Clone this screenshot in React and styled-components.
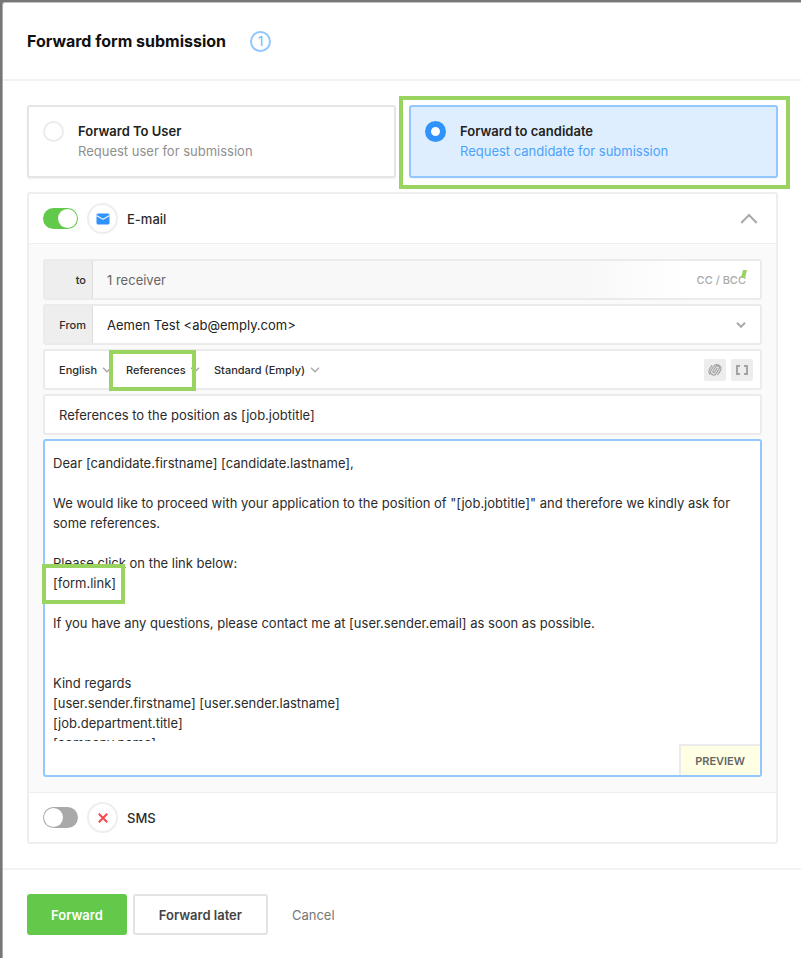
import React, { useState } from 'react';
import styled, { createGlobalStyle } from 'styled-components';

const BORDER = '#ebebeb';
const BLUE = '#2f93fb';
const LIGHT_BLUE = '#93c7fd';
const GREEN = '#62c94b';
const MARK_GREEN = '#98d45f';

const GlobalStyle = createGlobalStyle`
  *, *::before, *::after {
    box-sizing: border-box;
  }
  body {
    margin: 0;
    background: #777;
    color: #2b2b2b;
    font-family: Inter, 'Liberation Sans', sans-serif;
    font-size: 13px;
    line-height: 20px;
  }
  button, input, select, textarea {
    margin: 0;
    padding: 0;
    border: 0;
    background: none;
    color: inherit;
    font: inherit;
    appearance: none;
    outline: none;
  }
  button, select {
    cursor: pointer;
  }
`;

const Backdrop = styled.div`
  min-height: 100vh;
  display: flex;
  padding: 2px 0 0 2px;
`;
const Modal = styled.form`
  flex: 1;
  min-width: 0;
  background: white;
  border-left: 1px solid #aaa;
  border-top: 1px solid #c4c4c4;
  border-top-left-radius: 3px;
`;
const Header = styled.header`
  display: flex;
  align-items: center;
  gap: 24px;
  height: 78px;
  padding: 0 24px;
  border-bottom: 2px solid #f2f2f2;
`;
const Title = styled.h1`
  margin: 0;
  font-size: 16px;
  font-weight: 700;
  color: #111;
`;
const Step = styled.span`
  display: flex;
  align-items: center;
  justify-content: center;
  width: 21px;
  height: 21px;
  border: 2px solid ${LIGHT_BLUE};
  border-radius: 50%;
  color: #6fb4fb;
  font-size: 13px;
`;
const Body = styled.main`
  padding: 24px 23px 24px 24px;
`;

const Mark = styled.span`
  position: absolute;
  inset: ${({ $inset }) => $inset};
  border: 4px solid ${MARK_GREEN};
  pointer-events: none;
`;

const Choices = styled.div`
  display: grid;
  grid-template-columns: 1fr 1fr;
  gap: 13px;
  margin-bottom: 14px;
`;
const Choice = styled.label`
  position: relative;
  display: flex;
  gap: 14px;
  height: 73px;
  padding: 14px;
  border: 2px solid ${({ $active }) => ($active ? LIGHT_BLUE : '#e5e5e5')};
  border-radius: 3px;
  background: ${({ $active }) => ($active ? '#dfeefe' : 'white')};
  box-shadow: 0 1px 2px rgba(0, 0, 0, 0.06);
  cursor: pointer;
`;
const Radio = styled.input`
  flex: none;
  width: 21px;
  height: 21px;
  border: 2px solid #ececec;
  border-radius: 50%;
  background: white;
  &:checked {
    border: 6px solid ${BLUE};
  }
`;
const ChoiceText = styled.span`
  display: flex;
  flex-direction: column;
`;
const ChoiceTitle = styled.span`
  font-weight: 600;
  color: #222;
`;
const ChoiceHint = styled.span`
  color: ${({ $active }) => ($active ? '#4aa2fb' : '#8f8f8f')};
`;

const Panel = styled.section`
  border: 2px solid #eee;
  border-radius: 3px;
`;
const ChannelHead = styled.div`
  display: flex;
  align-items: center;
  height: 49px;
  padding: 0 14px;
`;
const Channel = styled.label`
  display: flex;
  align-items: center;
  gap: 9px;
  font-weight: 500;
`;
const Toggle = styled.input`
  display: flex;
  align-items: center;
  width: 35px;
  height: 21px;
  padding: 1px;
  border-radius: 11px;
  background: #a9a9a9;
  cursor: pointer;
  &::before {
    content: '';
    width: 19px;
    height: 19px;
    border-radius: 50%;
    background: white;
  }
  &:checked {
    justify-content: flex-end;
    background: ${GREEN};
  }
`;
const Badge = styled.span`
  display: flex;
  align-items: center;
  justify-content: center;
  width: 31px;
  height: 31px;
  border: 2px solid #eee;
  border-radius: 50%;
`;
const Collapse = styled.button`
  display: flex;
  margin-left: auto;
  padding: 4px;
`;

const Compose = styled.div`
  display: grid;
  gap: 4px;
  padding: 15px 14px;
  background: #fafafa;
  border-top: 1px solid #efefef;
  border-bottom: 1px solid #efefef;
`;
const Row = styled.div`
  display: flex;
  align-items: center;
  height: 41px;
  border: 2px solid ${BORDER};
  border-radius: 3px;
  background: ${({ $fade }) =>
    $fade ? 'linear-gradient(90deg, #f8f8f8 75%, white 90%)' : 'white'};
`;
const RowLabel = styled.label`
  align-self: stretch;
  display: flex;
  align-items: center;
  justify-content: flex-end;
  width: 48px;
  padding-right: 6px;
  border-right: 1px solid #ddd;
  background: #eee;
  font-size: 11px;
  font-weight: 500;
`;
const RowInput = styled.input`
  flex: 1;
  min-width: 0;
  padding: 0 14px;
  color: ${({ readOnly }) => (readOnly ? '#666' : 'inherit')};
`;
const RowSelect = styled.select`
  flex: 1;
  padding: 0 14px;
  color: #222;
`;
const CopyButton = styled.button`
  position: relative;
  margin-right: 14px;
  font-size: 11px;
  font-weight: 500;
  color: #aaa;
`;
const Tick = styled.span`
  position: absolute;
  top: 0;
  right: 0;
  width: 4px;
  height: 8px;
  background: ${MARK_GREEN};
  transform: skewX(-14deg);
`;
const RowChevron = styled.span`
  display: flex;
  margin-right: 14px;
`;
const Toolbar = styled(Row)`
  gap: 14px;
  padding: 0 7px 0 14px;
`;
const Picker = styled.div`
  position: relative;
  display: flex;
  align-items: center;
  gap: 4px;
`;
const SmallSelect = styled.select`
  font-size: 11px;
  font-weight: 500;
`;
const Tools = styled.div`
  display: flex;
  gap: 5px;
  margin-left: auto;
`;
const Tool = styled.button`
  display: flex;
  align-items: center;
  justify-content: center;
  width: 22px;
  height: 22px;
  border-radius: 2px;
  background: #ededed;
`;

const Editor = styled.div`
  position: relative;
  display: flex;
  flex-direction: column;
  gap: 3px;
  border: 2px solid ${LIGHT_BLUE};
  border-radius: 3px;
  background: white;
`;
const Message = styled.textarea`
  display: block;
  height: 300px;
  padding: 12px 8px 0;
  overflow: hidden;
  resize: none;
`;
const LinkMark = styled.span`
  position: absolute;
  top: 123px;
  left: -3px;
  width: 83px;
  height: 40px;
  border: 4px solid ${MARK_GREEN};
  pointer-events: none;
`;
const Preview = styled.button`
  align-self: flex-end;
  height: 31px;
  padding: 0 15px 0 14px;
  border: solid ${BORDER};
  border-width: 2px 0 0 2px;
  background: #feffe3;
  color: #666;
  font-size: 11px;
  font-weight: 600;
`;

const Footer = styled.footer`
  display: flex;
  align-items: center;
  gap: 6px;
  padding: 24px;
  border-top: 2px solid #f2f2f2;
`;
const Button = styled.button`
  height: 41px;
  padding: 0 24px;
  border: ${({ $primary }) => ($primary ? '0' : '2px solid #e3e3e3')};
  border-radius: 3px;
  background: ${({ $primary }) => ($primary ? GREEN : 'white')};
  color: ${({ $primary }) => ($primary ? 'white' : '#444')};
  font-weight: 600;
`;
const Cancel = styled.button`
  padding: 0 18px;
  color: #777;
`;

const Chevron = ({ size = 10, up, weight = 1.5 }) => (
  <svg width={size} height={size} viewBox="0 0 10 10" fill="none" stroke="#aaa" strokeWidth={weight}>
    <path d={up ? 'M0.7 7.2 5 2.8l4.3 4.4' : 'M1 2.8l4 4 4-4'} />
  </svg>
);

const MailIcon = () => (
  <svg width="14" height="12" viewBox="0 0 14 12">
    <rect x="0.5" y="0.5" width="13" height="11" rx="1.5" fill={BLUE} />
    <path d="M0.5 2.6l6.5 3.6 6.5-3.6" fill="none" stroke="#d9ebfe" strokeWidth="1.3" />
  </svg>
);

const CrossIcon = () => (
  <svg width="12" height="12" viewBox="0 0 12 12" stroke="#f4484d" strokeWidth="2">
    <path d="M1.8 1.8l8.4 8.4M10.2 1.8l-8.4 8.4" />
  </svg>
);

const ClipIcon = () => (
  <svg width="14" height="14" viewBox="0 0 14 14" fill="none" stroke="#a3a3a3" strokeWidth="1.2" strokeLinecap="round">
    <g transform="rotate(32 7 7)">
      <path d="M7.900 4.500v4.600a1 1 0 0 1-2 0V4a2 2 0 0 1 4 0v5.500a3 3 0 0 1-6 0V4.500a3.700 3.700 0 0 1 4-3.600 3.700 3.700 0 0 1 4 3.800v4.600" />
      <path d="M2 5v4.500a4.500 4.500 0 0 0 3 3.700" />
    </g>
  </svg>
);

const BracketsIcon = () => (
  <svg width="14" height="12" viewBox="0 0 14 12" fill="none" stroke="#a3a3a3" strokeWidth="2">
    <path d="M5 2H2v8h3M9 2h3v8H9" />
  </svg>
);

const MESSAGE = `Dear [candidate.firstname] [candidate.lastname],

We would like to proceed with your application to the position of "[job.jobtitle]" and therefore we kindly ask for some references.

Please click on the link below:
[form.link]

If you have any questions, please contact me at [user.sender.email] as soon as possible.


Kind regards
[user.sender.firstname] [user.sender.lastname]
[job.department.title]
[company.name]`;

const CHOICES = [
  { id: 'user', title: 'Forward To User', hint: 'Request user for submission' },
  { id: 'candidate', title: 'Forward to candidate', hint: 'Request candidate for submission', marked: true },
];

const PICKERS = [
  { name: 'Language', value: 'English' },
  { name: 'Template', value: 'References', marked: true },
  { name: 'Layout', value: 'Standard (Emply)' },
];

export default function App() {
  const [target, setTarget] = useState('candidate');
  const [email, setEmail] = useState(true);
  const [sms, setSms] = useState(false);
  const [open, setOpen] = useState(true);

  return (
    <Backdrop>
      <GlobalStyle />
      <Modal onSubmit={e => e.preventDefault()}>
        <Header>
          <Title>Forward form submission</Title>
          <Step>1</Step>
        </Header>
        <Body>
          <Choices>
            {CHOICES.map(({ id, title, hint, marked }) => (
              <Choice key={id} $active={target === id}>
                <Radio
                  type="radio"
                  name="target"
                  checked={target === id}
                  onChange={() => setTarget(id)}
                />
                <ChoiceText>
                  <ChoiceTitle>{title}</ChoiceTitle>
                  <ChoiceHint $active={target === id}>{hint}</ChoiceHint>
                </ChoiceText>
                {marked && <Mark $inset="-11px -14px -13px -12px" />}
              </Choice>
            ))}
          </Choices>
          <Panel>
            <ChannelHead>
              <Channel>
                <Toggle type="checkbox" checked={email} onChange={() => setEmail(!email)} />
                <Badge><MailIcon /></Badge>
                E-mail
              </Channel>
              <Collapse type="button" aria-label="Toggle e-mail" onClick={() => setOpen(!open)}>
                <Chevron size={18} up={open} weight={1.2} />
              </Collapse>
            </ChannelHead>
            {open && (
              <Compose>
                <Row $fade>
                  <RowLabel htmlFor="to">to</RowLabel>
                  <RowInput id="to" readOnly value="1 receiver" />
                  <CopyButton type="button">
                    CC / BCC
                    <Tick />
                  </CopyButton>
                </Row>
                <Row>
                  <RowLabel htmlFor="from">From</RowLabel>
                  <RowSelect id="from">
                    <option>Aemen Test &lt;ab@emply.com&gt;</option>
                  </RowSelect>
                  <RowChevron><Chevron weight={2} /></RowChevron>
                </Row>
                <Toolbar>
                  {PICKERS.map(({ name, value, marked }) => (
                    <Picker key={name}>
                      <SmallSelect aria-label={name}>
                        <option>{value}</option>
                      </SmallSelect>
                      <Chevron />
                      {marked && <Mark $inset="-10px 4px -11px -17px" />}
                    </Picker>
                  ))}
                  <Tools>
                    <Tool type="button" aria-label="Attach file"><ClipIcon /></Tool>
                    <Tool type="button" aria-label="Insert field"><BracketsIcon /></Tool>
                  </Tools>
                </Toolbar>
                <Row>
                  <RowInput aria-label="Subject" defaultValue="References to the position as [job.jobtitle]" />
                </Row>
                <Editor>
                  <Message aria-label="Message" defaultValue={MESSAGE} />
                  <LinkMark />
                  <Preview type="button">PREVIEW</Preview>
                </Editor>
              </Compose>
            )}
            <ChannelHead>
              <Channel>
                <Toggle type="checkbox" checked={sms} onChange={() => setSms(!sms)} />
                <Badge><CrossIcon /></Badge>
                SMS
              </Channel>
            </ChannelHead>
          </Panel>
        </Body>
        <Footer>
          <Button $primary>Forward</Button>
          <Button type="button">Forward later</Button>
          <Cancel type="button">Cancel</Cancel>
        </Footer>
      </Modal>
    </Backdrop>
  );
}
